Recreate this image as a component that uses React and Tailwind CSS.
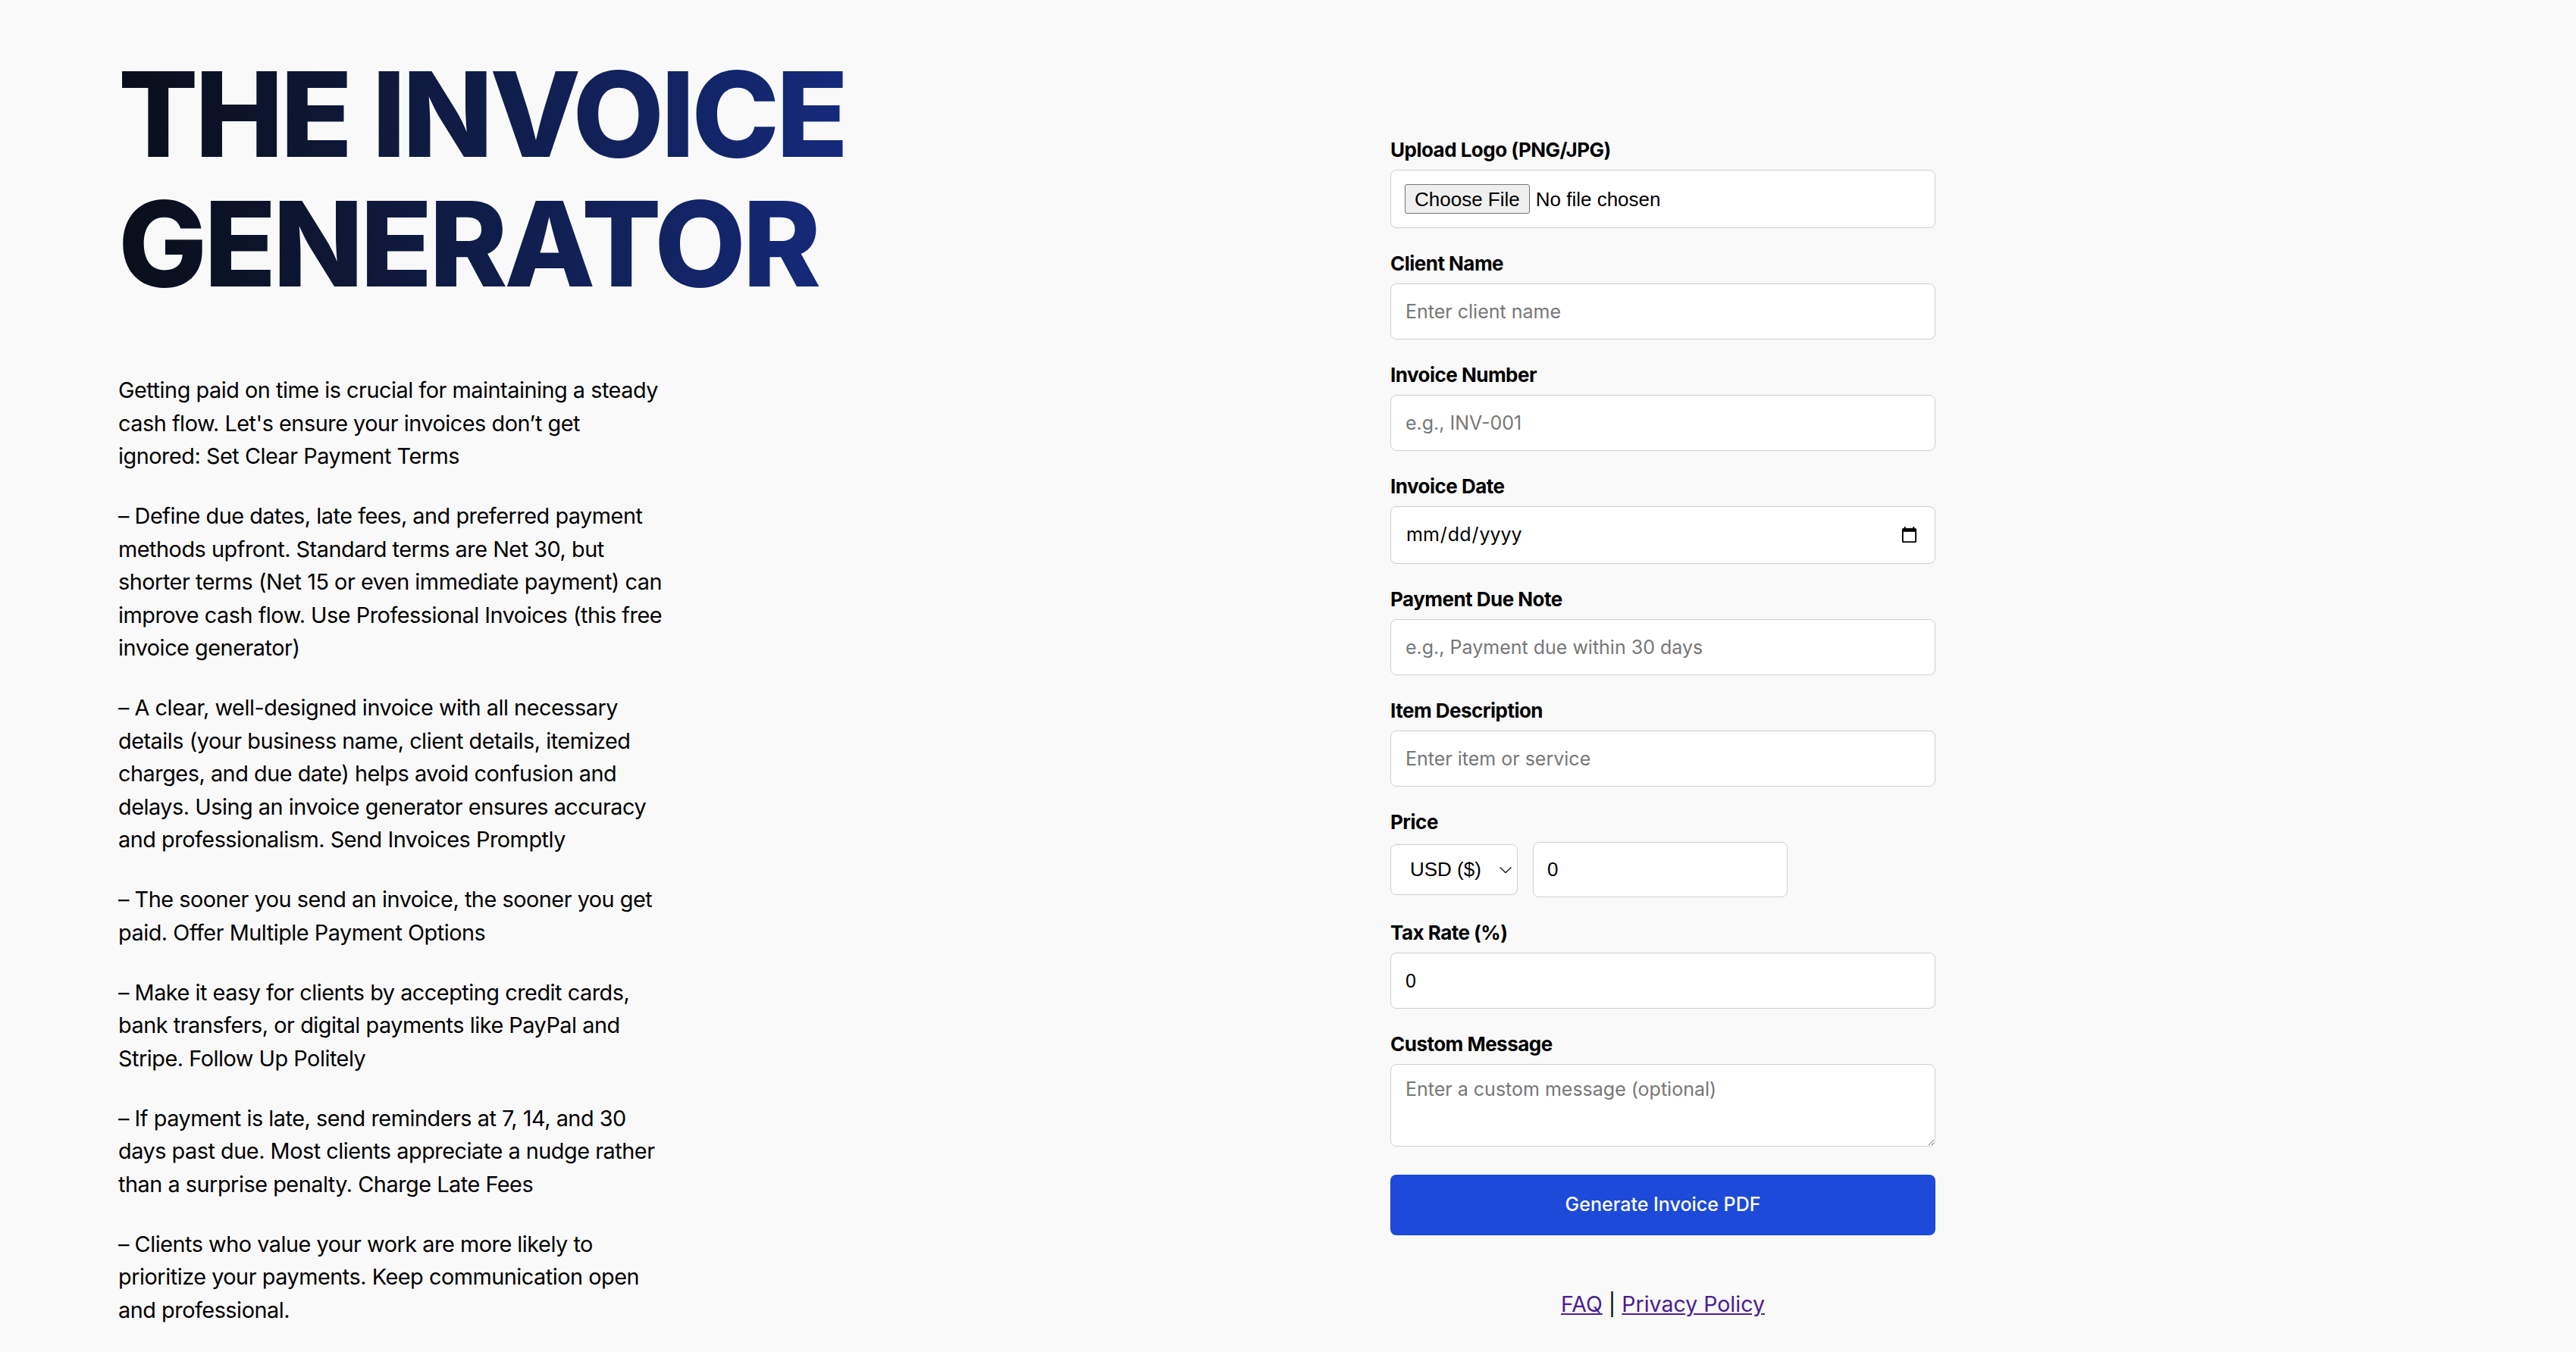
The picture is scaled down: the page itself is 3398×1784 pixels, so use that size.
import { useState } from "react";

const tips = [
  "Getting paid on time is crucial for maintaining a steady cash flow. Let's ensure your invoices don\u2019t get ignored: Set Clear Payment Terms",
  "\u2013 Define due dates, late fees, and preferred payment methods upfront. Standard terms are Net 30, but shorter terms (Net 15 or even immediate payment) can improve cash flow. Use Professional Invoices (this free invoice generator)",
  "\u2013 A clear, well-designed invoice with all necessary details (your business name, client details, itemized charges, and due date) helps avoid confusion and delays. Using an invoice generator ensures accuracy and professionalism. Send Invoices Promptly",
  "\u2013 The sooner you send an invoice, the sooner you get paid. Offer Multiple Payment Options",
  "\u2013 Make it easy for clients by accepting credit cards, bank transfers, or digital payments like PayPal and Stripe. Follow Up Politely",
  "\u2013 If payment is late, send reminders at 7, 14, and 30 days past due. Most clients appreciate a nudge rather than a surprise penalty. Charge Late Fees",
  "\u2013 Clients who value your work are more likely to prioritize your payments. Keep communication open and professional.",
];

const inputCls =
  "block w-full h-[74px] px-[19px] bg-white border border-[#cfcfcf] rounded-[8px] text-[25px] text-black placeholder:text-[#777] outline-none";

function Field({ label, children }) {
  return (
    <div className="mb-[31px]">
      <label className="block text-[26px] leading-[32px] font-bold tracking-[-0.02em] text-black mb-[10px]">
        {label}
      </label>
      {children}
    </div>
  );
}

export default function App() {
  const [currency, setCurrency] = useState("USD");

  return (
    <div className="min-h-screen bg-[#f9f9f9] font-['Inter',sans-serif] text-[#111]">
      <div className="grid grid-cols-2">
        {/* left: heading + tips */}
        <div className="pl-[156px] pt-[65px]">
          <h1 className="w-fit text-[156px] leading-[171px] font-extrabold tracking-[-0.027em] bg-gradient-to-r from-[#0a0e1a] to-[#152a7c] bg-clip-text text-transparent mb-[86px]">
            THE INVOICE
            <br />
            GENERATOR
          </h1>
          <div className="max-w-[720px]">
            {tips.map((t, i) => (
              <p key={i} className="text-[28.8px] leading-[43.5px] tracking-[-0.016em] mb-[35.5px] text-black">
                {t}
              </p>
            ))}
          </div>
        </div>

        {/* right: form */}
        <div className="pl-[135px] pt-[182px]">
          <form className="w-[719px]" onSubmit={(e) => e.preventDefault()}>
            <Field label="Upload Logo (PNG/JPG)">
              <input
                type="file"
                accept="image/png, image/jpeg"
                className="block w-full py-[17.5px] px-[18px] bg-white border border-[#cfcfcf] rounded-[8px] text-[26px] leading-[39px] text-black font-['Liberation_Sans',Arial,sans-serif] file:mr-[8px] file:px-[12px] file:h-[39px] file:bg-[#efefef] file:border file:border-[#767676] file:rounded-[3px] file:text-black"
              />
            </Field>
            <Field label="Client Name">
              <input type="text" placeholder="Enter client name" className={inputCls} />
            </Field>
            <Field label="Invoice Number">
              <input type="text" placeholder="e.g., INV-001" className={inputCls} />
            </Field>
            <Field label="Invoice Date">
              <input type="date" className={inputCls + " h-[76px]"} />
            </Field>
            <Field label="Payment Due Note">
              <input type="text" placeholder="e.g., Payment due within 30 days" className={inputCls} />
            </Field>
            <Field label="Item Description">
              <input type="text" placeholder="Enter item or service" className={inputCls} />
            </Field>
            <Field label="Price">
              <div className="flex items-center gap-[20px]">
                <div className="relative w-[168px]">
                  <select
                    value={currency}
                    onChange={(e) => setCurrency(e.target.value)}
                    className="appearance-none block w-full h-[67px] pl-[25px] pr-[40px] bg-white border border-[#cfcfcf] rounded-[8px] text-[26px] text-black font-['Liberation_Sans',Arial,sans-serif] outline-none"
                  >
                    <option value="USD">USD ($)</option>
                    <option value="EUR">EUR (€)</option>
                    <option value="GBP">GBP (£)</option>
                  </select>
                  <svg
                    className="absolute right-[7px] top-1/2 -translate-y-1/2 pointer-events-none"
                    width="18"
                    height="10"
                    viewBox="0 0 18 10"
                    fill="none"
                    stroke="#222"
                    strokeWidth="1.6"
                  >
                    <path d="M1.5 1.5 L9 8.5 L16.5 1.5" />
                  </svg>
                </div>
                <input
                  type="number"
                  defaultValue="0"
                  className="block w-[336px] h-[73px] px-[18px] bg-white border border-[#cfcfcf] rounded-[8px] text-[26px] text-black font-['Liberation_Sans',Arial,sans-serif] outline-none"
                />
              </div>
            </Field>
            <Field label="Tax Rate (%)">
              <input
                type="number"
                defaultValue="0"
                className={inputCls + " font-['Liberation_Sans',Arial,sans-serif]"}
              />
            </Field>
            <div className="mb-[37px]">
              <label className="block text-[26px] leading-[32px] font-bold tracking-[-0.02em] text-black mb-[10px]">
                Custom Message
              </label>
              <textarea
                placeholder="Enter a custom message (optional)"
                className="block w-full h-[109px] px-[19px] py-[14px] bg-white border border-[#cfcfcf] rounded-[8px] text-[25px] text-black placeholder:text-[#777] outline-none"
              />
            </div>
            <button
              type="submit"
              className="block w-full h-[80px] bg-[#1d4ad8] text-white text-[25px] font-medium rounded-[8px]"
            >
              Generate Invoice PDF
            </button>
          </form>
          <div className="w-[719px] text-center mt-[70px] text-[28.5px] text-black">
            <a href="/faq" className="underline text-[#4c1d8f]">FAQ</a>
            {" | "}
            <a href="/privacy" className="underline text-[#4c1d8f]">Privacy Policy</a>
          </div>
        </div>
      </div>
    </div>
  );
}
